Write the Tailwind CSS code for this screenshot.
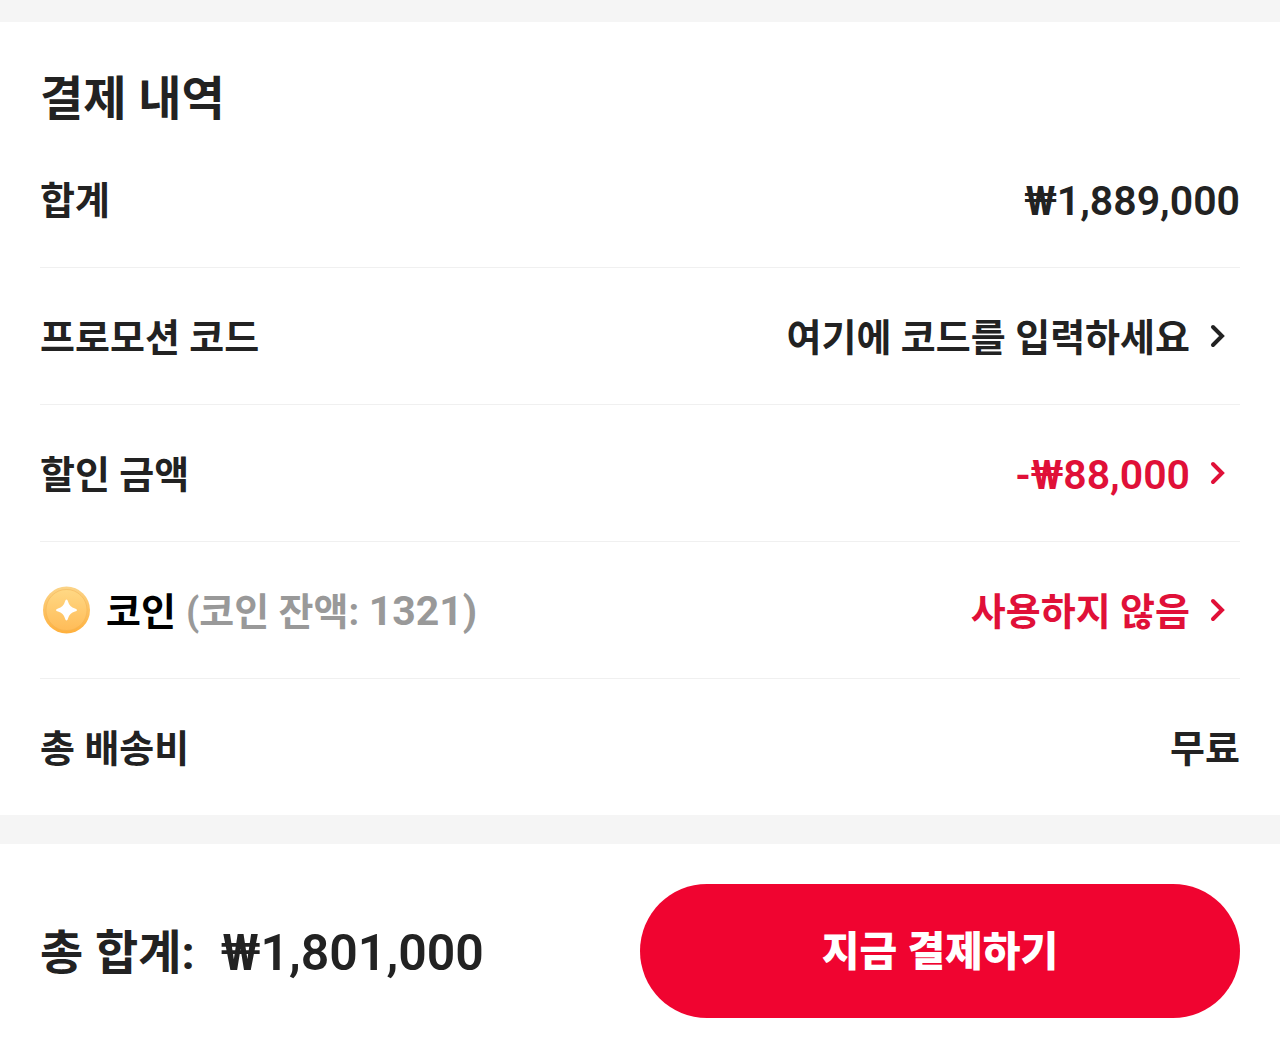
<!DOCTYPE html>
<html lang="ko">
<head>
    <title>결제 내역</title>
    <meta charset="utf-8">
    <meta name="viewport" content="width=device-width, initial-scale=1">
    <script src="https://cdn.jsdelivr.net/npm/@tailwindcss/browser@4"></script>
</head>
<body class="min-h-screen bg-white font-[Roboto,'Noto_Sans_CJK_KR',sans-serif] font-bold text-[#222]">
    <main class="border-t-22 border-[#f5f5f5] px-10 pt-[45px]">
        <h1 class="text-[47px] leading-16">결제 내역</h1>

        <!-- Payment rows -->
        <dl class="divide-y divide-[#f0f0f0] text-[38px] leading-14">
            <div class="flex items-center justify-between pt-[42px] pb-[38px]">
                <dt>합계</dt>
                <dd class="text-[41px] font-semibold">₩1,889,000</dd>
            </div>
            <div class="flex items-center justify-between pt-[42px] pb-[38px]">
                <dt>프로모션 코드</dt>
                <dd>
                    <button class="flex items-center gap-4">
                        여기에 코드를 입력하세요
                        <svg class="mb-1 h-7 w-[34px]" viewBox="0 0 34 28" fill="none" stroke="currentColor" stroke-width="4" stroke-linecap="round"><path d="M7 5l9 9-9 9"/></svg>
                    </button>
                </dd>
            </div>
            <div class="flex items-center justify-between pt-[42px] pb-[38px]">
                <dt>할인 금액</dt>
                <dd>
                    <button class="flex items-center gap-4 text-[#e01038]">
                        <span class="text-[41px] font-semibold">-₩88,000</span>
                        <svg class="mb-1 h-7 w-[34px]" viewBox="0 0 34 28" fill="none" stroke="currentColor" stroke-width="4" stroke-linecap="round"><path d="M7 5l9 9-9 9"/></svg>
                    </button>
                </dd>
            </div>
            <div class="flex items-center justify-between pt-[42px] pb-[38px]">
                <dt class="flex items-center text-black">
                    <svg class="mr-3.5 mb-1 h-12 w-13" viewBox="0 2 52 48">
                        <defs>
                            <linearGradient id="rim" x1="0" y1="0" x2="0" y2="1">
                                <stop offset="0" stop-color="#fbd488"/>
                                <stop offset="1" stop-color="#ffb03c"/>
                            </linearGradient>
                            <linearGradient id="face" x1="0" y1="0" x2="0" y2="1">
                                <stop offset="0" stop-color="#ffd884"/>
                                <stop offset="1" stop-color="#ffbc58"/>
                            </linearGradient>
                        </defs>
                        <circle cx="26.5" cy="26" r="23.5" fill="url(#rim)"/>
                        <circle cx="26.5" cy="26" r="20.5" fill="url(#face)" stroke="#f2b252" stroke-opacity=".5"/>
                        <path d="M26.5 15.5Q27.5 15.5 28 17.500Q29.500 23 35 24.500Q37 25 37 26Q37 27 35 27.500Q29.500 29 28 34.500Q27.500 36.500 26.500 36.500Q25.500 36.500 25 34.500Q23.500 29 18 27.500Q16 27 16 26Q16 25 18 24.500Q23.500 23 25 17.500Q25.500 15.500 26.500 15.500Z" fill="#fff"/>
                    </svg>
                    코인 <span class="ml-2.5 text-[#999]">(코인 잔액: <span class="text-[41px] leading-none">1321)</span></span>
                </dt>
                <dd>
                    <button class="flex items-center gap-4 text-[#e01038]">
                        사용하지 않음
                        <svg class="mb-1 h-7 w-[34px]" viewBox="0 0 34 28" fill="none" stroke="currentColor" stroke-width="4" stroke-linecap="round"><path d="M7 5l9 9-9 9"/></svg>
                    </button>
                </dd>
            </div>
            <div class="flex items-center justify-between pt-[42px] pb-[38px]">
                <dt>총 배송비</dt>
                <dd>무료</dd>
            </div>
        </dl>
    </main>

    <!-- Checkout bar -->
    <footer class="flex items-center border-t-29 border-[#f5f5f5] px-10 pt-10 pb-7">
        <p class="flex w-1/2 items-center gap-6.5 pt-1 text-[47px]">총 합계: <span class="text-[50px] font-semibold">₩1,801,000</span></p>
        <button class="h-[134px] w-1/2 rounded-full bg-[#f00430] pt-1 text-[41px] font-black text-white">지금 결제하기</button>
    </footer>
</body>
</html>
